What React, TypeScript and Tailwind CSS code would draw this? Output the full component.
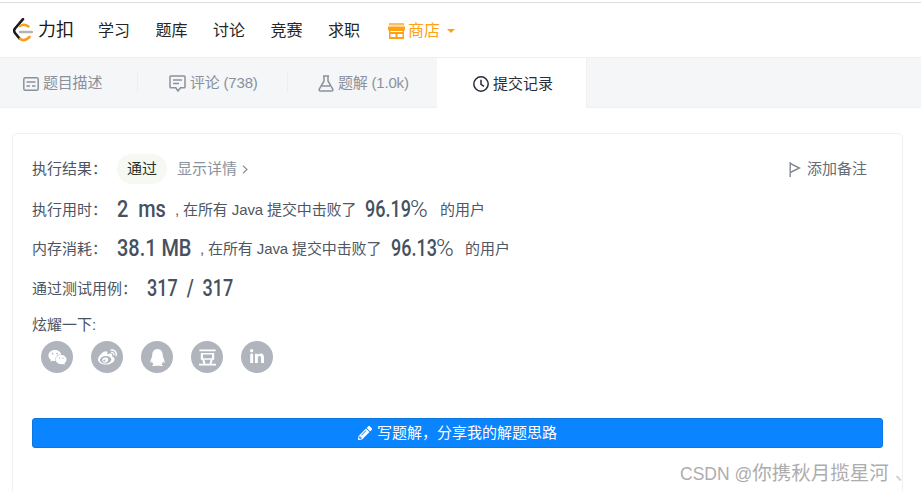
import React from "react";
import { FaWeixin, FaWeibo, FaQq, FaLinkedinIn, FaPencilAlt } from "react-icons/fa";
import { SiDouban } from "react-icons/si";

const cjk = "font-['Liberation_Sans','Noto_Sans_CJK_SC',sans-serif]";
const num = "font-['Roboto','Noto_Sans_CJK_SC',sans-serif]";

function Logo() {
  return (
    <svg width="20" height="24" viewBox="0 0 20 24" fill="none" className="shrink-0">
      <path d="M10 1.2 L2 10.5 C0.8 12 0.8 13.5 2 15 L6.5 20.5" stroke="#1a1a1a" strokeWidth="2.6" strokeLinecap="round" />
      <path d="M7 20.8 C9.5 23 12.5 22.8 16.5 19" stroke="#f89f1b" strokeWidth="2.6" strokeLinecap="round" />
      <path d="M7 8 C9.5 6.2 12.5 6.2 15.5 8.5" stroke="#f89f1b" strokeWidth="2.4" strokeLinecap="round" />
      <path d="M7 14 H19" stroke="#b3b3b3" strokeWidth="2.4" strokeLinecap="round" />
    </svg>
  );
}

function Store() {
  return (
    <svg width="17" height="16" viewBox="0 0 17 16" fill="#ffa116" className="shrink-0">
      <rect x="1" y="0" width="15" height="2.5" opacity="0.7" />
      <path d="M0 3.5 H17 V6.5 C17 7 16.5 7.5 16 7.5 V16 H1 V7.5 C0.5 7.5 0 7 0 6.5 Z M2.5 8 V9 H14.5 V8 Z M2.5 11 V14 H7.5 V11 Z M9.5 11 V14 H14.5 V11 Z" fillRule="evenodd" />
    </svg>
  );
}

function TabIconDesc() {
  return (
    <svg width="16" height="14" viewBox="0 0 16 14" fill="none" stroke="#8a919c" strokeWidth="1.5" className="shrink-0">
      <rect x="0.8" y="0.8" width="14.4" height="12.4" rx="1.5" />
      <path d="M3.5 5 H12.5 M3.5 9 H7 M9 9 H12.5" />
    </svg>
  );
}
function TabIconComment() {
  return (
    <svg width="17" height="18" viewBox="0 0 17 18" fill="none" stroke="#8a919c" strokeWidth="1.5" className="shrink-0">
      <path d="M1.8 1 H15.2 C15.7 1 16 1.3 16 1.8 V12 C16 12.5 15.7 12.8 15.2 12.8 H11.5 L9 16 L6.8 12.8 H1.8 C1.3 12.8 1 12.5 1 12 V1.8 C1 1.3 1.3 1 1.8 1 Z" />
      <path d="M4 5 H13 M4 8.5 H10" />
    </svg>
  );
}
function TabIconFlask() {
  return (
    <svg width="16" height="17" viewBox="0 0 16 17" fill="none" stroke="#8a919c" strokeWidth="1.5" className="shrink-0">
      <path d="M5 1 H11 M6 1 V6 L1.3 14 C0.8 15 1.3 16 2.4 16 H13.6 C14.7 16 15.2 15 14.7 14 L10 6 V1" />
      <path d="M4 11 H12" />
    </svg>
  );
}
function TabIconClock() {
  return (
    <svg width="16" height="16" viewBox="0 0 16 16" fill="none" stroke="#262d38" strokeWidth="1.5" className="shrink-0">
      <circle cx="8" cy="8" r="7.2" />
      <path d="M8 3.8 V8.3 L11 10.3" />
    </svg>
  );
}
function Flag() {
  return (
    <svg width="12" height="15" viewBox="0 0 12 15" fill="none" stroke="#858a92" strokeWidth="1.4" className="shrink-0">
      <path d="M1.2 0 V15" />
      <path d="M1.2 1.5 L10.5 6 L1.2 10.5" />
    </svg>
  );
}

function Share({ children }: { children: React.ReactNode }) {
  return (
    <div className="flex h-8 w-8 items-center justify-center rounded-full bg-[#b0b4bc] text-white">
      {children}
    </div>
  );
}

function Label({ children, w }: { children: React.ReactNode; w: string }) {
  return <div className={`shrink-0 text-[15px] whitespace-nowrap text-[#4b5563] ${w}`}>{children}</div>;
}

function Stat({ label, value, w, pct, pl }: { label: string; value: string; w: string; pct: string; pl: string }) {
  return (
    <div className="flex h-[24px] items-center">
      <Label w="w-[85px]">{label}</Label>
      <div className={`${w} shrink-0 pb-[2px] text-[24px] leading-none font-medium whitespace-pre text-[#46505e] ${num}`}>
        <span className="inline-block origin-left scale-x-[0.83]">{value}</span>
      </div>
      <div className="w-[181px] shrink-0 text-[15px] tracking-[-0.12px] whitespace-nowrap text-[#4f5763]">, 在所有 Java 提交中击败了</div>
      <div className={`${pl} flex w-[84px] shrink-0 pb-[2px] text-[24px] leading-none font-medium whitespace-nowrap text-[#46505e] ${num}`}>
        <span className="inline-block w-[45px] origin-left scale-x-[0.75]">{pct}</span>
        <span className="font-light">%</span>
      </div>
      <div className="shrink-0 text-[15px] whitespace-nowrap text-[#4f5763]">的用户</div>
    </div>
  );
}

export default function App() {
  return (
    <div className={`relative h-[491px] w-[921px] overflow-hidden bg-white ${cjk}`}>
      <div className="mt-[2px] h-[1px] bg-[#dddddd]" />
      <nav className="flex h-[54px] items-center pl-[13px]">
        <Logo />
        <span className="ml-[5px] w-[40px] pt-[1px] text-[18px] text-[#1a1a1a]">力扣</span>
        <div className="ml-[20px] flex gap-[25.5px] pt-[1px] text-base text-[#262626]">
          <span>学习</span>
          <span>题库</span>
          <span>讨论</span>
          <span>竞赛</span>
          <span>求职</span>
        </div>
        <div className="ml-[28px] flex items-center gap-[3px] pt-[1px] text-base text-[#ffa116]">
          <Store />
          <span>商店</span>
          <span className="ml-[4px] h-0 w-0 border-x-[4px] border-t-[4px] border-x-transparent border-t-[#ffa116]" />
        </div>
      </nav>

      <div className="flex h-[51px] border-y border-[#eff0f2] bg-[#f5f6f8] text-[15px] tracking-[-0.2px] text-[#8a919c]">
        <div className="flex w-[137px] items-center gap-[4px] pt-[2px] pl-[23px]">
          <TabIconDesc />
          <span>题目描述</span>
        </div>
        <div className="my-[14px] w-px bg-[#eceef0]" />
        <div className="flex w-[149px] items-center gap-[4px] pt-[2px] pl-[31px]">
          <TabIconComment />
          <span>评论 (738)</span>
        </div>
        <div className="my-[14px] w-px bg-[#eceef0]" />
        <div className="flex w-[149px] items-center gap-[4px] pt-[2px] pl-[30px]">
          <TabIconFlask />
          <span>题解 (1.0k)</span>
        </div>
        <div className="-mb-px flex w-[150px] items-center gap-[4px] border-r border-[#eff0f2] bg-white pt-[2px] pl-[36px] tracking-normal text-[#262d38]">
          <TabIconClock />
          <span>提交记录</span>
        </div>
      </div>

      <div className="mx-[12px] mt-[25px] h-[380px] w-[891px] rounded-[5px] border border-[#f0f0f0] px-[19px] pt-[20px]">
        <div className="flex h-[30px] items-center">
          <Label w="w-[85px]">执行结果：</Label>
          <div className="flex h-[30px] w-[50px] items-center justify-center rounded-full bg-[#f5f9f1] text-[15px] text-[#2b2f24]">通过</div>
          <div className="ml-[10px] flex items-center gap-[5px] text-[15px] text-[#8a919c]">
            <span>显示详情</span>
            <svg width="6" height="9" viewBox="0 0 6 9" fill="none" stroke="#8a919c" strokeWidth="1.2">
              <path d="M1 0.8 L5 4.5 L1 8.2" />
            </svg>
          </div>
          <div className="mr-[16px] ml-auto flex items-center gap-[6px] text-[15px] text-[#666c75]">
            <Flag />
            <span>添加备注</span>
          </div>
        </div>

        <div className="mt-[14px]">
          <Stat label="执行用时：" value="2  ms" w="w-[58px]" pct="96.19" pl="pl-[9px]" />
        </div>
        <div className="mt-[15px]">
          <Stat label="内存消耗：" value="38.1 MB" w="w-[83px]" pct="96.13" pl="pl-[10px]" />
        </div>

        <div className="mt-[16px] flex h-[24px] items-center">
          <Label w="w-[115px]">通过测试用例：</Label>
          <div className={`pb-[2px] text-[24px] leading-none font-medium whitespace-pre text-[#46505e] ${num}`}>
            <span className="inline-block origin-left scale-x-[0.75]">{"317  /  317"}</span>
          </div>
        </div>

        <div className="mt-[13px] text-[15px] leading-[22px] text-[#4b5563]">炫耀一下:</div>
        <div className="mt-[5px] flex gap-[18px] pl-[9px]">
          <Share><FaWeixin size={19} /></Share>
          <Share><FaWeibo size={19} /></Share>
          <Share><FaQq size={17} /></Share>
          <Share><SiDouban size={17} /></Share>
          <Share><FaLinkedinIn size={16} /></Share>
        </div>

        <button className={`mt-[45px] flex h-[30px] w-full items-center justify-center gap-[5px] rounded-[3px] border border-[#0b77e0] bg-[#0a84ff] text-[15px] text-white ${cjk}`}>
          <FaPencilAlt size={14} />
          <span>写题解，分享我的解题思路</span>
        </button>
      </div>

      <div className="absolute top-[460px] left-[680px] leading-[26px] whitespace-nowrap text-[#adadad]">
        <span className="text-[17.5px]">CSDN @</span>
        <span className="text-[19.5px]">你携秋月揽星河</span>
        <span className="ml-[6px] text-[19.5px] text-[#d0d0d0]">、</span>
      </div>
    </div>
  );
}
